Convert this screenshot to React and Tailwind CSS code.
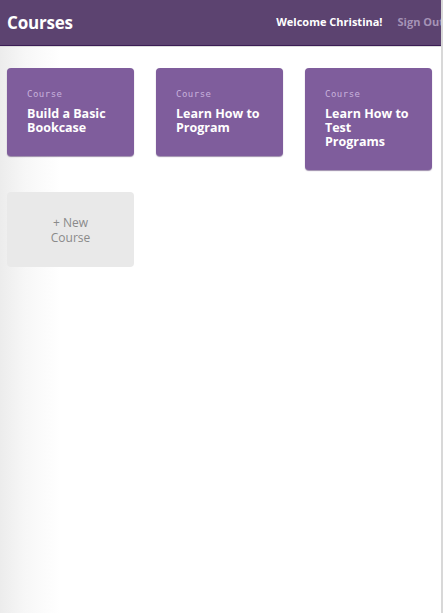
export default function App() {
  const courses = [
    { title: "Build a Basic Bookcase" },
    { title: "Learn How to Program" },
    { title: "Learn How to Test Programs" },
  ];
  return (
    <div
      className="w-[444px] h-[613px] overflow-hidden bg-[linear-gradient(to_right,#ececec_0px,#f7f7f7_25px,#ffffff_60px)]"
      style={{ fontFamily: '"Open Sans", "Liberation Sans", sans-serif' }}
    >
      <div className="w-[443px] h-full border-r-2 border-[#d8d8d8] overflow-hidden">
        <header className="h-[46px] bg-[#5c4370] border-b border-[#3b1d55] shadow-[0_1px_0_#dcdcdc] flex items-center pl-[7px] whitespace-nowrap">
          <h1 className="text-[17px] font-bold text-white tracking-[-0.2px] flex-1">Courses</h1>
          <span className="text-[11px] font-bold text-white">Welcome Christina!</span>
          <span className="text-[11px] font-bold text-[#a593b6] ml-[15px] -mr-[3px]">Sign Out</span>
        </header>
        <main className="flex flex-wrap items-start gap-[22px] pl-[7px] pt-[22px]">
          {courses.map((c) => (
            <div
              key={c.title}
              className="w-[127px] rounded-[4px] bg-[#7f5d9c] shadow-[0_1px_1px_rgba(60,30,90,0.5)] pl-[20px] pr-[21px] pt-[20px] pb-[21px]"
            >
              <div
                className="text-[9px] leading-[12px] tracking-[0.5px] text-[#c8b2dc] mb-[7px]"
                style={{ fontFamily: '"DejaVu Sans Mono", "Liberation Mono", monospace' }}
              >
                Course
              </div>
              <div className="text-[12.5px] leading-[14px] font-bold text-white">{c.title}</div>
            </div>
          ))}
          <div className="w-[127px] h-[75px] rounded-[4px] bg-[#e9e9e9] flex flex-col items-center justify-center text-center text-[12px] leading-[15px] text-[#8a8a8a]">
            <div>+ New</div>
            <div>Course</div>
          </div>
        </main>
      </div>
    </div>
  );
}
